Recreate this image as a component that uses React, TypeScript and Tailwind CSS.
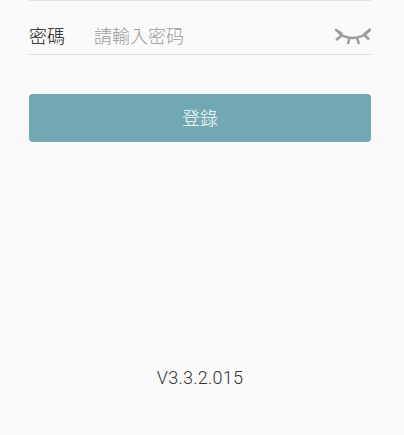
function EyeClosed() {
  return (
    <svg width="38" height="18" viewBox="0 0 38 18" fill="none" stroke="#9c9c9c" strokeWidth="2.5" className="block shrink-0">
      <path d="M3 2.5C10 12.5 27 12.5 36 2" />
      <path d="M1 1.5L8 5.5" />
      <path d="M2 12L8.5 7" />
      <path d="M14 16L15.5 10" />
      <path d="M25 16L23 10" />
      <path d="M35 11.5L30 6.5" />
      <path d="M36.5 1L30 6.5" />
    </svg>
  );
}

export default function App() {
  return (
    <div className="h-[435px] w-[404px] overflow-hidden bg-[#fafafa] pl-[29px] pr-[33px] font-['Roboto','Noto_Sans_CJK_TC',sans-serif]">
      <div className="h-px bg-[#e2e2e2]"></div>
      <div className="flex h-[54px] items-center border-b border-[#dcdcdc] pt-[17px]">
        <label className="w-[66px] text-[18px] font-light text-[#111111]">密碼</label>
        <span className="flex-1 -ml-px text-[18px] font-light text-[#9a9a9a]">請輸入密码</span>
        <span className="-mr-px pt-px">
          <EyeClosed />
        </span>
      </div>
      <button className="mt-[39px] block h-[48px] w-full rounded-[4px] bg-[#72a8b3] text-[18px] font-light text-white">
        登錄
      </button>
      <p className="mt-[224px] text-center text-[18px] font-light leading-[24px] tracking-[0.25px] text-[#333333]">V3.3.2.015</p>
    </div>
  );
}
